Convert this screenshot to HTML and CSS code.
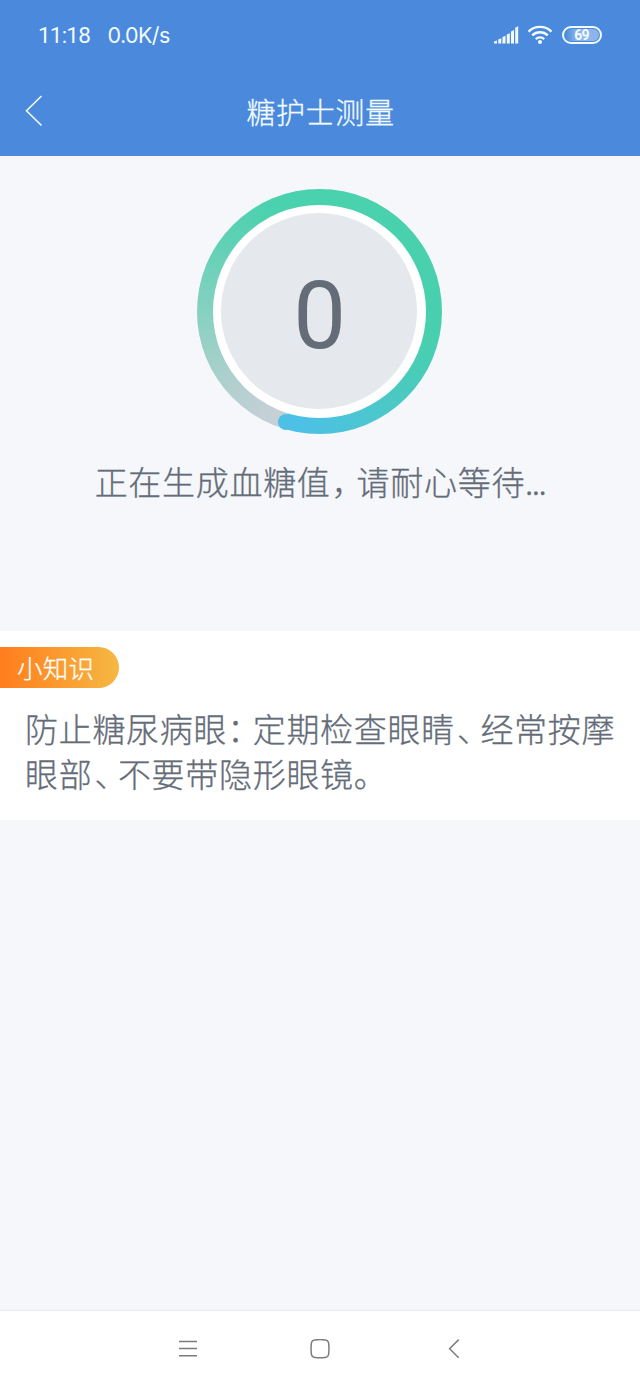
FILE: index.html
```html
<!DOCTYPE html>
<html lang="zh-CN">
<head>
<meta charset="utf-8">
<title>糖护士测量</title>
<link rel="stylesheet" href="styles.css">
</head>
<body>
<div class="screen">
  <header class="header">
    <div class="status">
      <span class="clock">11:18</span>
      <span class="speed">0.0K/s</span>
      <svg class="signal" width="25" height="18" viewBox="0 0 25 18">
        <path d="M0 17.500v-2l3-1v3zM4.300 17.500v-4l3-1.200v5.200zM8.500 17.500v-6.500l3-1.200v7.700zM12.800 17.500V8.500l3-1.200v10.200zM17 17.500V5.500l3-1.500v13.500zM21.200 17.500V1.800L24.200.3v17.200z"/>
      </svg>
      <svg class="wifi" width="26" height="20" viewBox="0 0 26 20">
        <path class="wave" d="M1.500 6.600a16.500 16.500 0 0 1 23 0M5.200 10.400a11.200 11.200 0 0 1 15.600 0M8.800 14.100a6.100 6.100 0 0 1 8.400 0"/>
        <circle cx="13" cy="17" r="2"/>
      </svg>
      <span class="battery"><span class="level">69</span></span>
    </div>
    <div class="titlebar">
      <svg class="back" width="18" height="32" viewBox="0 0 18 32"><path d="M16.500 1L1.500 15.700l15 14.800"/></svg>
      <h1 class="title">糖护士测量</h1>
      <span class="spacer"></span>
    </div>
  </header>
  <main class="content">
    <section class="measure">
      <div class="ring">
        <div class="ring-gap"><div class="disc">0</div></div>
        <span class="ring-cap"></span>
      </div>
      <p class="message">正在生成血糖值<span class="comma">，</span>请耐心等待<span class="dots">...</span></p>
    </section>
    <section class="tip">
      <div class="tag">小知识</div>
      <p class="tip-text">防止糖尿病眼<span class="colon">：</span>定期检查眼睛<span class="pause">、</span>经常按摩<br>眼部<span class="pause">、</span>不要带隐形眼镜<span class="stop">。</span></p>
    </section>
  </main>
  <nav class="nav">
    <svg width="20" height="20" viewBox="0 0 20 20"><path d="M1 2.500h18M1 9.500h18M1 16.700h18"/></svg>
    <svg width="20" height="20" viewBox="0 0 20 20"><path d="M5 .9Q10 .3 15 .9Q18.300 1.100 18.700 4.700Q19.200 9.700 18.700 14.700Q18.300 18.300 15 18.500Q10 19.100 5 18.500Q1.700 18.300 1.300 14.700Q.8 9.700 1.300 4.700Q1.700 1.100 5 .9Z"/></svg>
    <svg width="20" height="20" viewBox="0 0 20 20"><path d="M14.700.6L5.600 9.700l9.100 9.100"/></svg>
  </nav>
</div>
</body>
</html>
```
FILE: styles.css
```css
* { box-sizing: border-box; }
body {
  margin: 0;
  background: #f5f7fb;
  color: #646c78;
  font-family: Roboto, "Noto Sans CJK SC", sans-serif;
  font-weight: 300;
}
.screen {
  display: flex;
  flex-direction: column;
  height: 1387px;
}
.header {
  height: 156px;
  background: #4a89dc;
  color: #f2fbff;
}
.status {
  display: flex;
  align-items: center;
  height: 70px;
  padding: 0 38px;
  font-size: 22px;
  font-weight: 400;
}
.clock {
  width: 69.5px;
  font-size: 22.5px;
  letter-spacing: -0.8px;
}
.speed {
  font-family: Inter, sans-serif;
  font-size: 21.5px;
  letter-spacing: -0.6px;
}
.signal { margin: 0 8px 0 auto; fill: #f2fbff; }
.wifi { margin-right: 9px; fill: #f2fbff; }
.wave { fill: none; stroke: #f2fbff; stroke-width: 2.3; }
.battery {
  width: 40px;
  height: 18px;
  padding: 1px;
  border: 2px solid #f2fbff;
  border-radius: 9px;
}
.level {
  display: block;
  width: 34px;
  height: 12px;
  padding-right: 1px;
  border-radius: 6px;
  background: linear-gradient(90deg, #4a89dc 0, #8db5ea 12px);
  font-size: 14px;
  font-weight: 700;
  line-height: 13px;
  letter-spacing: -0.8px;
  text-align: center;
}
.titlebar {
  display: flex;
  align-items: center;
  justify-content: space-between;
  height: 82px;
  padding: 0 25px;
}
.back { fill: none; stroke: #f2fbff; stroke-width: 1.6; }
.title {
  margin: 0 0 0 1px;
  font-family: "Noto Sans CJK SC", sans-serif;
  font-size: 29px;
  font-weight: 300;
  letter-spacing: 0.6px;
  -webkit-text-stroke: 0.3px;
}
.spacer { width: 18px; }
.content { flex: 1; }
.measure {
  display: flex;
  flex-direction: column;
  align-items: center;
  height: 475px;
  padding-top: 33px;
}
.ring {
  position: relative;
  width: 245px;
  height: 245px;
  margin-right: 1px;
  padding: 16px;
  border-radius: 50%;
  background: conic-gradient(#4ad1ad 0deg, #48d0ae 105deg, #4acabf 132deg, #4cc6d2 158deg, #4dc0e6 190deg, #4dc0e6 197deg, #c6cfd7 197deg, #c3d0d6 210deg, #a5d0ca 242deg, #86d1c1 270deg, #62d1b5 304deg, #4ad1ad 335deg);
}
.ring-gap {
  width: 212.5px;
  height: 212.5px;
  padding: 8.4px;
  border-radius: 50%;
  background: #fff;
}
.disc {
  height: 195.7px;
  padding: 5px 0 0 1px;
  border-radius: 50%;
  background: #e5e9ee;
  font-size: 94px;
  font-weight: 400;
  line-height: 196px;
  text-align: center;
}
.ring-cap {
  position: absolute;
  left: 81px;
  top: 224.5px;
  width: 16px;
  height: 16px;
  border-radius: 50%;
  background: #4dc0e6;
}
.message, .tip-text {
  font-family: "Noto Sans CJK SC", sans-serif;
  font-size: 33px;
  letter-spacing: 0.7px;
  white-space: nowrap;
  -webkit-text-stroke: 0.3px;
}
.message { margin: 22px 0 0; line-height: 50px; }
.comma, .colon, .pause, .stop {
  display: inline-block;
  font-feature-settings: "halt";
}
.comma { width: 26px; padding-left: 1px; }
.colon { width: 25.5px; }
.pause { width: 25.5px; padding-left: 2px; }
.stop { padding-left: 0; }
.dots { letter-spacing: -1.5px; }
.tip {
  height: 189px;
  padding-top: 16px;
  background: #fff;
}
.tag {
  width: 119px;
  height: 41px;
  padding-left: 17px;
  border-radius: 0 21px 21px 0;
  background: linear-gradient(90deg, #ff7d1d, #f6b842);
  color: #fff;
  font-family: "Noto Sans CJK SC", sans-serif;
  font-size: 25.5px;
  line-height: 39px;
  letter-spacing: 0.3px;
  -webkit-text-stroke: 0.3px;
}
.tip-text { margin: 18px 0 0 25px; line-height: 45px; }
.nav {
  display: flex;
  justify-content: center;
  gap: 112px;
  height: 77px;
  padding-top: 28px;
  border-top: 1px solid #e9ebef;
  background: #fff;
}
.nav svg { fill: none; stroke: #7c7c7c; stroke-width: 1.5; }
.nav svg:last-child { margin-left: 2px; margin-right: -2px; }
```
